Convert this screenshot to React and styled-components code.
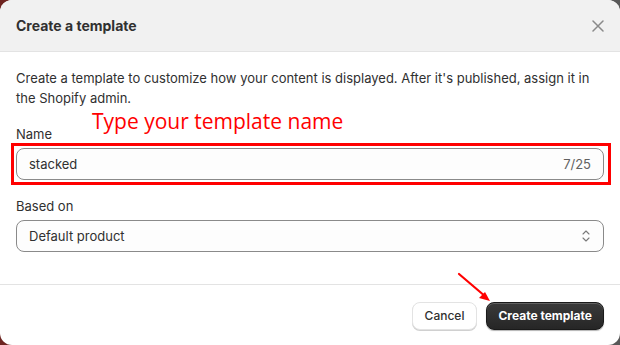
import React from "react";
import styled, { createGlobalStyle } from "styled-components";

const Global = createGlobalStyle`
  html, body { margin: 0; padding: 0; }
  body {
    width: 620px;
    height: 345px;
    overflow: hidden;
    background: linear-gradient(to right, #6e2420 0%, #6e2420 50%, #585858 50%, #585858 100%);
    font-family: Inter, "Noto Sans", sans-serif;
  }
`;

const Modal = styled.div`
  position: relative;
  width: 620px;
  height: 345px;
  background: #ffffff;
  border-radius: 12px;
  overflow: hidden;
  display: flex;
  flex-direction: column;
  color: #303030;
`;

const Header = styled.div`
  height: 52px;
  box-sizing: border-box;
  background: #f1f1f1;
  border-bottom: 1px solid #e3e3e3;
  display: flex;
  align-items: center;
  justify-content: space-between;
  padding: 1px 16px 0 16px;
  flex-shrink: 0;
`;

const Title = styled.h2`
  margin: 0;
  font-size: 14px;
  font-weight: 650;
  color: #303030;
  line-height: 20px;
`;

const CloseButton = styled.button`
  border: none;
  background: transparent;
  padding: 0;
  width: 20px;
  height: 20px;
  display: flex;
  align-items: center;
  justify-content: center;
  margin-right: -4px;
  cursor: pointer;
`;

const Body = styled.div`
  padding: 16px 16px 0 16px;
  height: 233px;
  box-sizing: border-box;
  border-bottom: 1px solid #e3e3e3;
  flex-shrink: 0;
`;

const Paragraph = styled.p`
  margin: 0 0 16px 0;
  font-size: 13px;
  line-height: 20px;
  color: #303030;
`;

const Field = styled.div`
  display: flex;
  flex-direction: column;
  gap: 4px;
  margin-bottom: 16px;
`;

const Label = styled.label`
  font-size: 13px;
  line-height: 20px;
  color: #303030;
`;

const InputBox = styled.div`
  position: relative;
  height: 32px;
  box-sizing: border-box;
  border: 1px solid #8a8a8a;
  border-radius: 8px;
  background: #fdfdfd;
  display: flex;
  align-items: center;
  justify-content: space-between;
  padding: 0 12px;
  font-size: 13px;
  color: #303030;

  ${(p) =>
    p.$highlight &&
    `
    &::after {
      content: "";
      position: absolute;
      left: -6px;
      right: -8px;
      top: -6px;
      bottom: -6px;
      border: 3px solid #ff0000;
      pointer-events: none;
    }
  `}
`;

const Counter = styled.span`
  color: #616161;
  font-size: 13px;
`;

const Annotation = styled.div`
  position: absolute;
  left: 92px;
  top: 107px;
  font-family: "Open Sans", "Liberation Sans", sans-serif;
  font-size: 21px;
  color: #ff0000;
  line-height: 28px;
  white-space: nowrap;
`;

const Arrow = styled.svg`
  position: absolute;
  left: 452px;
  top: 268px;
`;

const Footer = styled.div`
  flex: 1;
  display: flex;
  justify-content: flex-end;
  align-items: center;
  gap: 9px;
  padding: 1px 16px 0 16px;
`;

const Button = styled.button`
  height: 28px;
  box-sizing: border-box;
  border-radius: 8px;
  padding: 0 ${(p) => (p.$primary ? "11px" : "12px")};
  font-family: Inter, "Noto Sans", sans-serif;
  font-size: 12px;
  cursor: pointer;
  ${(p) =>
    p.$primary
      ? `
    background: linear-gradient(#3a3a3a, #262626);
    color: #ffffff;
    font-weight: 650;
    border: 1px solid #1a1a1a;
    box-shadow: inset 0 1px 0 rgba(255,255,255,0.2), 0 1px 1px rgba(0,0,0,0.3);
  `
      : `
    background: #ffffff;
    color: #303030;
    font-weight: 500;
    border: 1px solid #e3e3e3;
    box-shadow: 0 1px 0 #d0d0d0;
  `}
`;

const CloseIcon = () => (
  <svg width="12" height="12" viewBox="0 0 12 12">
    <path d="M1 1 L11 11 M11 1 L1 11" stroke="#8a8a8a" strokeWidth="1.5" strokeLinecap="round" />
  </svg>
);

const SelectIcon = () => (
  <svg width="10" height="14" viewBox="0 0 10 14">
    <path d="M2 5 L5 2 L8 5" fill="none" stroke="#7a7a7a" strokeWidth="1.1" strokeLinecap="round" strokeLinejoin="round" />
    <path d="M2 9 L5 12 L8 9" fill="none" stroke="#7a7a7a" strokeWidth="1.1" strokeLinecap="round" strokeLinejoin="round" />
  </svg>
);

export default function App() {
  return (
    <>
      <Global />
      <Modal>
        <Header>
          <Title>Create a template</Title>
          <CloseButton aria-label="Close">
            <CloseIcon />
          </CloseButton>
        </Header>
        <Body>
          <Paragraph>
            Create a template to customize how your content is displayed. After it's published, assign it in
            the Shopify admin.
          </Paragraph>
          <Field>
            <Label>Name</Label>
            <InputBox $highlight>
              <span>stacked</span>
              <Counter>7/25</Counter>
            </InputBox>
          </Field>
          <Field>
            <Label>Based on</Label>
            <InputBox>
              <span>Default product</span>
              <SelectIcon />
            </InputBox>
          </Field>
        </Body>
        <Footer>
          <Button>Cancel</Button>
          <Button $primary>Create template</Button>
        </Footer>
        <Annotation>Type your template name</Annotation>
        <Arrow width="44" height="38" viewBox="0 0 44 38">
          <path d="M7 6 L34 29" stroke="#ff0000" strokeWidth="2.2" strokeLinecap="round" />
          <path d="M38 33 L27 30 L33 24 Z" fill="#ff0000" />
        </Arrow>
      </Modal>
    </>
  );
}
